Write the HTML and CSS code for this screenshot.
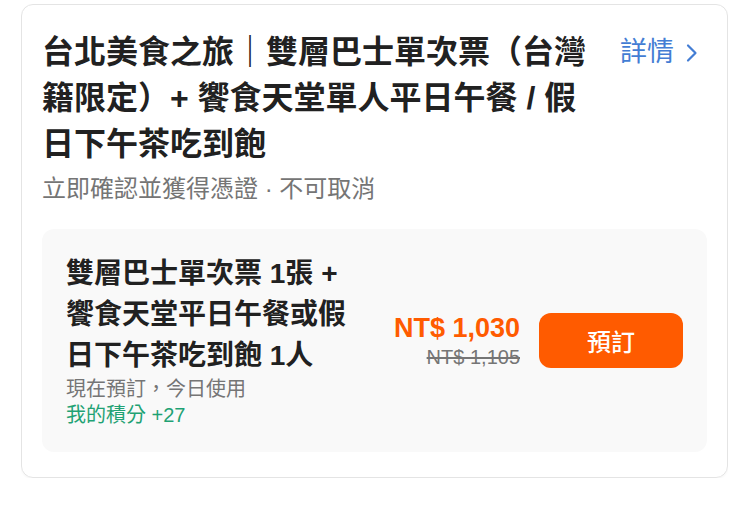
FILE: index.html
```html
<!DOCTYPE html>
<html>
    <head>
        <meta charset="UTF-8">
        <link rel="stylesheet" href="styles.css">
    </head>
    <body>
        <div class="card">
            <div class="cardHead">
                <h2 class="title">台北美食之旅｜雙層巴士單次票（台灣籍限定）+ 饗食天堂單人平日午餐 / 假日下午茶吃到飽</h2>
                <a class="details" href="#">詳情<svg class="chevron" width="12" height="20" viewBox="0 0 12 20"><path d="M2 2.5 L9.5 10 L2 17.5" fill="none" stroke="#437dd4" stroke-width="2.2" stroke-linecap="round" stroke-linejoin="round"/></svg></a>
            </div>
            <div class="subtitle">立即確認並獲得憑證 · 不可取消</div>

            <div class="package">
                <div class="pkgInfo">
                    <div class="pkgName">雙層巴士單次票 1張 + 饗食天堂平日午餐或假日下午茶吃到飽 1人</div>
                    <div class="pkgNote">現在預訂，今日使用</div>
                    <div class="pkgPoints">我的積分 +27</div>
                </div>
                <div class="priceBox">
                    <div class="price">NT$ 1,030</div>
                    <div class="oldPrice">NT$ 1,105</div>
                </div>
                <button class="btnBook">預訂</button>
            </div>
        </div>
    </body>
</html>
```

FILE: styles.css
```css
body {
    margin: 4px 22px 0 21px;
    background: #ffffff;
    font-family: "Liberation Sans", "Noto Sans CJK TC", sans-serif;
    color: #212121;
}

.card {
    border: 1px solid #e4e4e4;
    border-radius: 12px;
    padding: 24px 20px 25px 20px;
    box-shadow: 0 1px 2px rgba(0, 0, 0, 0.04);
}

.cardHead {
    display: flex;
    align-items: flex-start;
    gap: 23px;
}

.title {
    flex: 1;
    margin: 0;
    font-size: 32px;
    line-height: 46px;
    font-weight: 700;
    color: #212121;
}

.details {
    display: flex;
    align-items: flex-start;
    margin-top: 8px;
    margin-right: 9px;
    font-size: 27px;
    line-height: 30px;
    color: #437dd4;
    text-decoration: none;
}

.chevron {
    margin-left: 12px;
    margin-top: 6px;
}

.subtitle {
    margin-top: 6px;
    font-size: 24px;
    line-height: 32px;
    color: #757575;
}

.package {
    display: flex;
    align-items: center;
    margin-top: 24px;
    padding: 24px;
    background: #f9f9f9;
    border-radius: 12px;
}

.pkgInfo {
    flex: 1;
    margin-right: 30px;
}

.pkgName {
    font-size: 28px;
    line-height: 41px;
    font-weight: 700;
    color: #212121;
}

.pkgNote {
    font-size: 20px;
    line-height: 26px;
    color: #757575;
}

.pkgPoints {
    font-size: 20px;
    line-height: 26px;
    color: #1fa274;
}

.priceBox {
    text-align: right;
    margin-right: 19px;
}

.price {
    font-size: 27px;
    line-height: 32px;
    font-weight: 700;
    color: #ff5b00;
}

.oldPrice {
    font-size: 20px;
    line-height: 26px;
    color: #757575;
    text-decoration: line-through;
}

.btnBook {
    width: 144px;
    height: 55px;
    border: none;
    border-radius: 12px;
    background: #ff5b00;
    color: #ffffff;
    font-family: "Liberation Sans", "Noto Sans CJK TC", sans-serif;
    font-size: 24px;
    font-weight: 500;
}
```
